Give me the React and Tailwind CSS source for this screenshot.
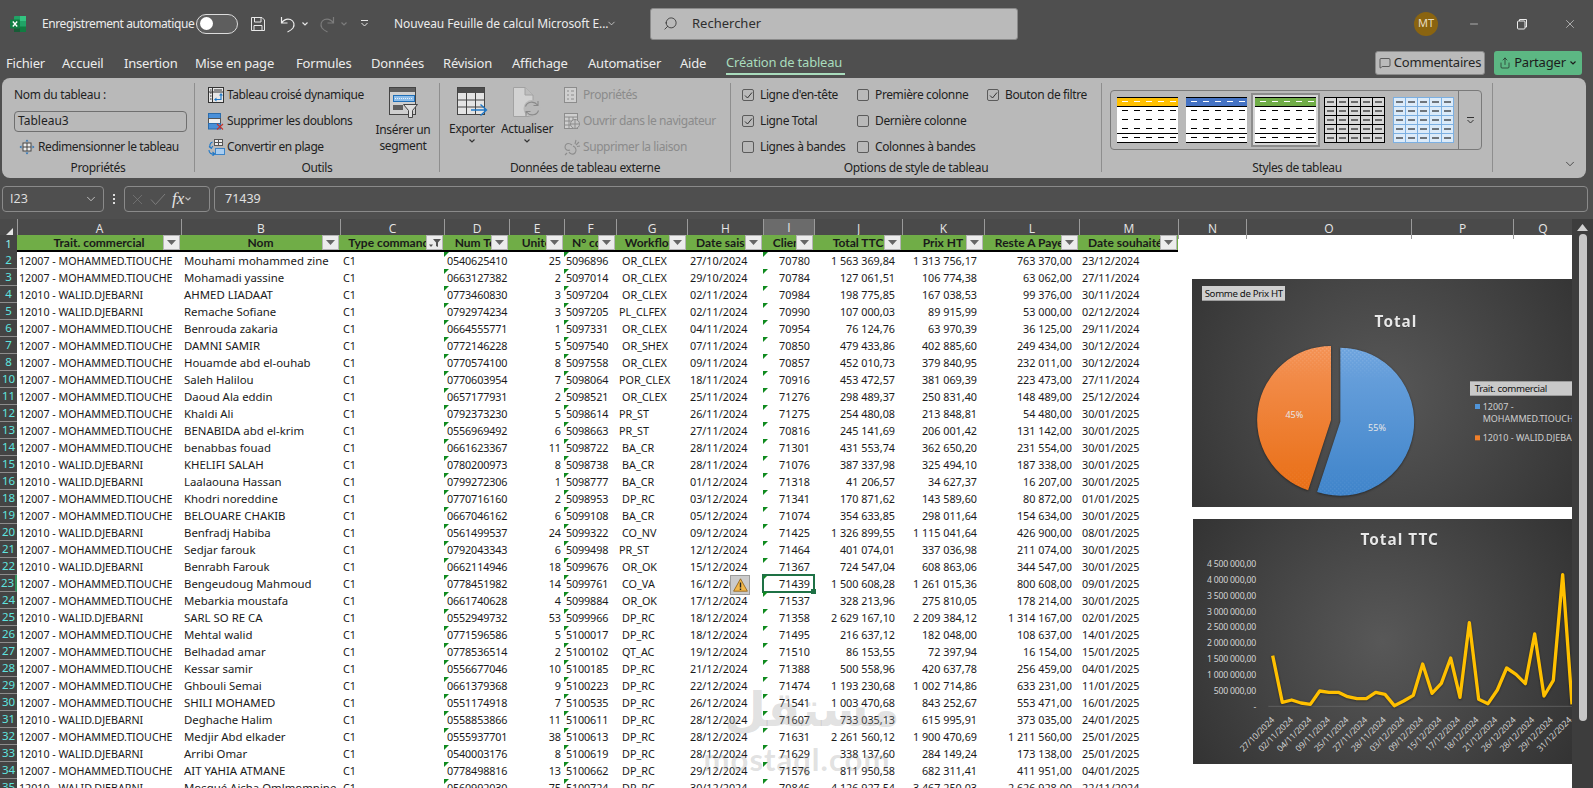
import { ChevronDown, Search, MessageSquare, Share, Minus, X } from 'lucide-react';

const T = '12007 - MOHAMMED.TIOUCHE';
const D = '12010 - WALID.DJEBARNI';

const rows = [
  [2, T, 'Mouhami mohammed zine', '0540625410', 25, '5096896', 'OR_CLEX', '27/10/2024', '70780', '1 563 369,84', '1 313 756,17', '763 370,00', '23/12/2024'],
  [3, T, 'Mohamadi yassine', '0663127382', 2, '5097014', 'OR_CLEX', '29/10/2024', '70784', '127 061,51', '106 774,38', '63 062,00', '27/11/2024'],
  [4, D, 'AHMED LIADAAT', '0773460830', 3, '5097204', 'OR_CLEX', '02/11/2024', '70984', '198 775,85', '167 038,53', '99 376,00', '30/11/2024'],
  [5, D, 'Remache Sofiane', '0792974234', 3, '5097205', 'PL_CLFEX', '02/11/2024', '70990', '107 000,03', '89 915,99', '53 000,00', '02/12/2024'],
  [6, T, 'Benrouda zakaria', '0664555771', 1, '5097331', 'OR_CLEX', '04/11/2024', '70954', '76 124,76', '63 970,39', '36 125,00', '29/11/2024'],
  [7, T, 'DAMNI SAMIR', '0772146228', 5, '5097540', 'OR_SHEX', '07/11/2024', '70850', '479 433,86', '402 885,60', '249 434,00', '30/12/2024'],
  [8, T, 'Houamde abd el-ouhab', '0770574100', 8, '5097558', 'OR_CLEX', '09/11/2024', '70857', '452 010,73', '379 840,95', '232 011,00', '30/12/2024'],
  [10, T, 'Saleh Halilou', '0770603954', 7, '5098064', 'POR_CLEX', '18/11/2024', '70916', '453 472,57', '381 069,39', '223 473,00', '27/11/2024'],
  [11, T, 'Daoud Ala eddin', '0657177931', 2, '5098521', 'OR_CLEX', '25/11/2024', '71276', '298 489,37', '250 831,40', '148 489,00', '25/12/2024'],
  [12, T, 'Khaldi Ali', '0792373230', 5, '5098614', 'PR_ST', '26/11/2024', '71275', '254 480,08', '213 848,81', '54 480,00', '30/01/2025'],
  [13, T, 'BENABIDA abd el-krim', '0556969492', 6, '5098663', 'PR_ST', '27/11/2024', '70816', '245 141,69', '206 001,42', '131 142,00', '30/01/2025'],
  [14, T, 'benabbas fouad', '0661623367', 11, '5098722', 'BA_CR', '28/11/2024', '71301', '431 553,74', '362 650,20', '231 554,00', '30/01/2025'],
  [15, D, 'KHELIFI SALAH', '0780200973', 8, '5098738', 'BA_CR', '28/11/2024', '71076', '387 337,98', '325 494,10', '187 338,00', '30/01/2025'],
  [16, D, 'Laalaouna Hassan', '0799272306', 1, '5098777', 'BA_CR', '01/12/2024', '71318', '41 206,57', '34 627,37', '16 207,00', '30/01/2025'],
  [18, T, 'Khodri noreddine', '0770716160', 2, '5098953', 'DP_RC', '03/12/2024', '71341', '170 871,62', '143 589,60', '80 872,00', '01/01/2025'],
  [19, T, 'BELOUARE CHAKIB', '0667046162', 6, '5099108', 'BA_CR', '05/12/2024', '71074', '354 633,85', '298 011,64', '154 634,00', '30/01/2025'],
  [20, D, 'Benfradj Habiba', '0561499537', 24, '5099322', 'CO_NV', '09/12/2024', '71425', '1 326 899,55', '1 115 041,64', '426 900,00', '08/01/2025'],
  [21, T, 'Sedjar farouk', '0792043343', 6, '5099498', 'PR_ST', '12/12/2024', '71464', '401 074,01', '337 036,98', '211 074,00', '30/01/2025'],
  [22, D, 'Benrabh Farouk', '0662114946', 18, '5099676', 'OR_OK', '15/12/2024', '71367', '724 547,04', '608 863,06', '344 547,00', '30/01/2025'],
  [23, T, 'Bengeudoug Mahmoud', '0778451982', 14, '5099761', 'CO_VA', '16/12/2024', '71439', '1 500 608,28', '1 261 015,36', '800 608,00', '09/01/2025'],
  [24, T, 'Mebarkia moustafa', '0661740628', 4, '5099884', 'OR_OK', '17/12/2024', '71537', '328 213,96', '275 810,05', '178 214,00', '30/01/2025'],
  [25, D, 'SARL SO RE CA', '0552949732', 53, '5099966', 'DP_RC', '18/12/2024', '71358', '2 629 167,10', '2 209 384,12', '1 314 167,00', '02/01/2025'],
  [26, T, 'Mehtal walid', '0771596586', 5, '5100017', 'DP_RC', '18/12/2024', '71495', '216 637,12', '182 048,00', '108 637,00', '14/01/2025'],
  [27, T, 'Belhadad amar', '0778536514', 2, '5100102', 'QT_AC', '19/12/2024', '71510', '86 153,55', '72 397,94', '16 154,00', '15/01/2025'],
  [28, T, 'Kessar samir', '0556677046', 10, '5100185', 'DP_RC', '21/12/2024', '71388', '500 558,96', '420 637,78', '256 459,00', '04/01/2025'],
  [29, T, 'Ghbouli Semai', '0661379368', 9, '5100223', 'DP_RC', '22/12/2024', '71474', '1 193 230,68', '1 002 714,86', '633 231,00', '11/01/2025'],
  [30, T, 'SHILI MOHAMED', '0551174918', 7, '5100535', 'DP_RC', '26/12/2024', '71541', '1 003 470,68', '843 252,67', '553 471,00', '16/01/2025'],
  [31, D, 'Deghache Halim', '0558853866', 11, '5100611', 'DP_RC', '28/12/2024', '71607', '733 035,13', '615 995,91', '373 035,00', '24/01/2025'],
  [32, T, 'Medjir Abd elkader', '0555937701', 38, '5100613', 'DP_RC', '28/12/2024', '71631', '2 261 560,12', '1 900 470,69', '1 211 560,00', '25/01/2025'],
  [33, D, 'Arribi Omar', '0540003176', 8, '5100619', 'DP_RC', '28/12/2024', '71629', '338 137,60', '284 149,24', '173 138,00', '25/01/2025'],
  [34, T, 'AIT YAHIA ATMANE', '0778498816', 13, '5100662', 'DP_RC', '29/12/2024', '71576', '811 950,58', '682 311,41', '411 951,00', '04/01/2025'],
  [35, D, 'Mosqué Aicha Omlmomnine', '0560992030', 75, '5100724', 'DP_RC', '30/12/2024', '70846', '4 126 927,54', '3 467 250,03', '2 626 928,00', '22/11/2024'],
];

const gridCols = 'grid grid-cols-[17px_164px_159px_104px_65px_55px_52px_71px_76px_51px_88px_82px_95px_99px_1fr]';

const columnLetters = ['A', 'B', 'C', 'D', 'E', 'F', 'G', 'H', 'I', 'J', 'K', 'L', 'M'];
const headers = ['Trait. commercial', 'Nom', 'Type commande', 'Num Tel', 'Unité', 'N° cde', 'Workflow', 'Date saisie', 'Client', 'Total TTC', 'Prix HT', 'Reste A Payer', 'Date souhaitée'];

const tabs = [
  ['Fichier', 'w-[56px]'],
  ['Accueil', 'w-[62px]'],
  ['Insertion', 'w-[71px]'],
  ['Mise en page', 'w-[101px]'],
  ['Formules', 'w-[75px]'],
  ['Données', 'w-[72px]'],
  ['Révision', 'w-[69px]'],
  ['Affichage', 'w-[76px]'],
  ['Automatiser', 'w-[92px]'],
  ['Aide', 'w-[46px]'],
];

function ExcelIcon() {
  return (
    <svg width="16" height="16" viewBox="0 0 16 16">
      <rect x="4" y="0" width="12" height="16" rx="1" fill="#21a366" />
      <rect x="10" y="0" width="6" height="5" fill="#33c481" />
      <rect x="10" y="10.5" width="6" height="5.5" fill="#107c41" />
      <rect x="4" y="10.5" width="6" height="5.5" fill="#185c37" />
      <rect x="0" y="3.5" width="10" height="9" rx="1" fill="#107c41" />
      <path d="M2.8 5.5 L7.2 10.5 M7.2 5.5 L2.8 10.5" stroke="#fff" strokeWidth="1.3" />
    </svg>
  );
}

function SaveIcon() {
  return (
    <svg width="16" height="16" viewBox="0 0 16 16" fill="none" stroke="#e8e8e8" strokeWidth="1">
      <path d="M1.5 1.5 H12 L14.5 4 V14.5 H1.5 Z" />
      <path d="M4.5 1.5 V6 H11 V1.5 M4 14.5 V9.5 H12 V14.5" />
    </svg>
  );
}

function UndoIcon({ color }) {
  return (
    <svg width="16" height="18" viewBox="0 0 16 18" fill="none" stroke={color} strokeWidth="1.2">
      <path d="M1.5 2 V8 H7.5 M1.5 8 C4 4.5 7.5 3.5 10.5 4.5 C14 6 15 10 13 13 C11.5 15 9.5 16 7.5 17" />
    </svg>
  );
}

function TinyChevron({ color = '#e6e6e6' }) {
  return (
    <svg width="8" height="8" viewBox="0 0 8 8" fill="none" stroke={color} strokeWidth="1.2">
      <path d="M1.5 2.5 L4 5 L6.5 2.5" />
    </svg>
  );
}

function TitleBar() {
  return (
    <div className="h-[47px] flex items-center text-[#ececec] text-[12px]">
      <div className="ml-[10px] w-[16px]"><ExcelIcon /></div>
      <div className="ml-[16px] w-[154px] whitespace-nowrap tracking-[-0.42px]">Enregistrement automatique</div>
      <div className="w-[42px] h-[20px] rounded-full border border-[#dcdcdc] bg-[#5e5e5e] flex items-center pl-[3px]">
        <div className="w-[13px] h-[13px] rounded-full bg-white" />
      </div>
      <div className="ml-[12px] w-[16px]"><SaveIcon /></div>
      <div className="ml-[14px] w-[16px]"><UndoIcon color="#ececec" /></div>
      <div className="ml-[5px] w-[8px]"><TinyChevron /></div>
      <div className="ml-[10px] w-[16px] -scale-x-100"><UndoIcon color="#7c7c7c" /></div>
      <div className="ml-[5px] w-[8px]"><TinyChevron color="#7c7c7c" /></div>
      <div className="ml-[12px] w-[9px]">
        <svg width="9" height="9" viewBox="0 0 9 9" fill="none" stroke="#e6e6e6" strokeWidth="1">
          <path d="M1 1.5 H8 M1.5 4 L4.5 7 L7.5 4" />
        </svg>
      </div>
      <div className="ml-[25px] w-[212px] whitespace-nowrap tracking-[-0.1px]">Nouveau Feuille de calcul Microsoft E...</div>
      <div className="w-[10px]"><ChevronDown size={11} strokeWidth={1.5} /></div>
      <div className="ml-[34px] w-[368px] h-[32px] rounded-[3px] bg-[#bababa] border border-[#8a8a8a] flex items-center text-[#2e2e2e] text-[13px]">
        <Search size={15} strokeWidth={1.3} className="ml-[12px] -scale-x-100" />
        <span className="ml-[14px]">Rechercher</span>
      </div>
      <div className="ml-[396px] w-[24px] h-[24px] rounded-full bg-[#8a6410] flex items-center justify-center text-[11px] text-[#e8dcc0]">MT</div>
      <Minus size={12} strokeWidth={1.2} className="ml-[30px]" />
      <svg width="12" height="12" viewBox="0 0 12 12" fill="none" stroke="#ececec" strokeWidth="1" className="ml-[36px]">
        <rect x="1.5" y="3" width="7.5" height="8" rx="1" />
        <path d="M3.5 3 V1.5 H10.5 V9 H9" />
      </svg>
      <X size={14} strokeWidth={1} className="ml-[35px]" />
    </div>
  );
}

function TabBar() {
  return (
    <div className="h-[31px] flex items-start pl-[6px] text-[13px] text-[#ececec]">
      {tabs.map(([label, w]) => (
        <div key={label} className={w + ' h-[28px] flex items-center whitespace-nowrap tracking-[-0.2px] pt-[6px]'}>{label}</div>
      ))}
      <div className="w-[119px] h-[28px] flex items-center whitespace-nowrap tracking-[-0.2px] pt-[6px] text-[#a9dcbd] border-b-2 border-[#a9dcbd]">
        Création de tableau
      </div>
      <div className="ml-[530px] mt-[4px] w-[110px] h-[24px] rounded-[3px] bg-[#bababa] border border-[#8a8a8a] flex items-center justify-center gap-[3px] text-[#262626]">
        <MessageSquare size={12} strokeWidth={1.3} />
        <span className="tracking-[-0.2px]">Commentaires</span>
      </div>
      <div className="ml-[9px] mt-[4px] w-[88px] h-[24px] rounded-[3px] bg-[#5cb783] flex items-center justify-center gap-[3px] text-[#1c1c1c]">
        <Share size={12} strokeWidth={1.3} />
        <span className="tracking-[-0.2px]">Partager</span>
        <TinyChevron color="#1c1c1c" />
      </div>
    </div>
  );
}

function PivotIcon() {
  return (
    <svg width="16" height="16" viewBox="0 0 16 16" fill="none">
      <rect x="0.5" y="0.5" width="15" height="15" fill="#e6e6e6" stroke="#333" />
      <path d="M4.5 1 V15" stroke="#333" />
      <path d="M6 3 H14 M2 3 H3.5 M2 6 H3.5 M2 9 H3.5 M2 12 H3.5 M1 5 H15" stroke="#333" />
      <path d="M8 12.5 H13 V8" stroke="#1f78c8" strokeWidth="1.2" />
      <path d="M6 12.5 L8.5 10.5 V14.5 Z M13 6 L11 8.5 H15 Z" fill="#1f78c8" />
    </svg>
  );
}

function DedupeIcon() {
  return (
    <svg width="17" height="17" viewBox="0 0 17 17" fill="none">
      <rect x="0.5" y="0.5" width="12" height="5" fill="#4a90d9" stroke="#2c6cab" />
      <rect x="0.5" y="5.5" width="12" height="5" fill="#efefef" stroke="#555" />
      <rect x="0.5" y="10.5" width="12" height="5.5" fill="#4a90d9" stroke="#2c6cab" />
      <path d="M9 11 L15 16.5 M15 11 L9 16.5" stroke="#c8322b" strokeWidth="1.2" />
    </svg>
  );
}

function ConvertIcon() {
  return (
    <svg width="17" height="17" viewBox="0 0 17 17" fill="none">
      <rect x="6.5" y="0.5" width="8" height="6" fill="#eee" stroke="#555" />
      <path d="M10.5 .5 V6.5 M6.5 3.5 H14.5" stroke="#555" />
      <rect x="7.5" y="9.5" width="9" height="6" fill="#a9cdf0" stroke="#3b84c8" />
      <path d="M4.5 3 C1.5 4 1 7.5 3 9 M1 7.5 L3.3 9.5 L4.8 7" stroke="#1f78c8" strokeWidth="1.1" />
      <path d="M1 11 C1 14 3 15.5 6.5 15 M4.5 13 L6.8 15 L4.5 16.8" stroke="#1f78c8" strokeWidth="1.1" />
    </svg>
  );
}

function ResizeIcon() {
  return (
    <svg width="16" height="16" viewBox="0 0 16 16" fill="none">
      <rect x="4" y="4" width="8" height="8" fill="#eee" stroke="#444" />
      <path d="M8 4 V12 M4 8 H12" stroke="#444" />
      <path d="M8 0.5 L6.5 2.5 H9.5 Z M8 15.5 L6.5 13.5 H9.5 Z M0.5 8 L2.5 6.5 V9.5 Z M15.5 8 L13.5 6.5 V9.5 Z" fill="#1f6fb8" />
    </svg>
  );
}

function SliceIcon() {
  return (
    <svg width="29" height="31" viewBox="0 0 29 31" fill="none">
      <rect x="0.5" y="0.5" width="26" height="27" fill="#cfcfcf" stroke="#444" />
      <rect x="1" y="1" width="25" height="4" fill="#5e5e5e" />
      <rect x="4.5" y="8.5" width="21" height="6" fill="#8cbdea" stroke="#1f6fb8" />
      <path d="M6 11.5 H24" stroke="#e8f2fb" strokeDasharray="1 1" />
      <rect x="4" y="18" width="10" height="5" fill="#5e5e5e" />
      <path d="M14.5 17.5 H28.5 L23.5 23.5 V30.5 L19.5 30.5 V23.5 Z" fill="#dedede" stroke="#444" />
    </svg>
  );
}

function ExportIcon() {
  return (
    <svg width="31" height="31" viewBox="0 0 31 31" fill="none">
      <rect x="0.5" y="0.5" width="27" height="27" fill="#e4e4e4" stroke="#444" />
      <rect x="1" y="1" width="26" height="5" fill="#4d4d4d" />
      <path d="M1 13 H27 M1 20 H27 M9.5 6 V27 M18.5 6 V27" stroke="#444" />
      <path d="M14 23 H29 M23.5 17.5 L29.5 23 L23.5 28.5" stroke="#1f78c8" strokeWidth="1.4" />
    </svg>
  );
}

function RefreshIcon() {
  return (
    <svg width="28" height="31" viewBox="0 0 28 31" fill="none">
      <path d="M0.5 0.5 H12 L20 8 V29.5 H0.5 Z" fill="#d2d2d2" stroke="#a2a2a2" />
      <path d="M12 0.5 V8 H20" fill="#bdbdbd" stroke="#a2a2a2" />
      <circle cx="19" cy="21.5" r="8.5" fill="#b9b9b9" />
      <path d="M12.5 19.5 C14 14.5 21 13.5 24.5 18 M25 14 V18.5 H20.5 M25.5 23.5 C24 28.5 17 29.5 13.5 25 M13 29 V24.5 H17.5" stroke="#8a8a8a" strokeWidth="1.1" />
    </svg>
  );
}

function DisabledIcon({ kind }) {
  if (kind === 'props') {
    return (
      <svg width="13" height="16" viewBox="0 0 13 16" fill="none" stroke="#8c8c8c">
        <rect x="0.5" y="0.5" width="12" height="15" fill="#cfcfcf" />
        <path d="M3 4 H5 M7 4 H10 M3 8 H5 M7 8 H10 M3 12 H5 M7 12 H10" />
      </svg>
    );
  }
  if (kind === 'open') {
    return (
      <svg width="16" height="17" viewBox="0 0 16 17" fill="none" stroke="#8c8c8c">
        <rect x="0.5" y="0.5" width="13" height="15" fill="#cfcfcf" />
        <path d="M1 4 H13 M1 8 H13 M1 12 H13 M5 4 V15 M9 4 V15" />
        <circle cx="11" cy="11" r="4.5" fill="#c6c6c6" />
        <path d="M6.5 11 H15.5 M11 6.5 V15.5" />
      </svg>
    );
  }
  return (
    <svg width="17" height="17" viewBox="0 0 17 17" fill="none" stroke="#8c8c8c" strokeWidth="1.1">
      <path d="M8 6 C4 3 1 5 1 8 C1 11 4 12 6 11 M9 7 C12 8 13 12 11 14 C9 16 6 15 5 13" />
      <path d="M12 1 L11 5 M15 3 L12 6 M16 7 L13 7.5 M3 14 L1 16" />
    </svg>
  );
}

function RibbonRow({ icon, label, dim }) {
  return (
    <div className={'h-[26px] flex items-center whitespace-nowrap ' + (dim ? 'text-[#8b8b8b]' : '')}>
      <div className="w-[19px] flex items-center">{icon}</div>
      <span className="tracking-[-0.42px]">{label}</span>
    </div>
  );
}

function Check({ checked, label }) {
  return (
    <div className="h-[26px] flex items-center whitespace-nowrap">
      <div className="w-[12px] h-[12px] rounded-[2px] border border-[#5b5b5b] flex items-center justify-center">
        {checked && (
          <svg width="9" height="9" viewBox="0 0 9 9" fill="none" stroke="#333" strokeWidth="1">
            <path d="M1 4.5 L3.5 7 L8 1.5" />
          </svg>
        )}
      </div>
      <span className="ml-[6px] tracking-[-0.38px]">{label}</span>
    </div>
  );
}

function GroupLabel({ children }) {
  return <div className="h-[16px] flex items-center justify-center whitespace-nowrap tracking-[-0.35px]">{children}</div>;
}

function Sep() {
  return <div className="w-px h-[89px] mt-[5px] shrink-0 bg-[#8e8e8e]" />;
}

function StyleThumb({ color, selected }) {
  const xs = [5, 17, 29, 41, 53];
  return (
    <div className={selected ? 'w-[69px] h-[54px] -mx-[4px] flex items-center justify-center border-2 border-[#8c8c8c] bg-[#d6d6d6]' : 'h-[46px]'}>
      <svg width="61" height="46" viewBox="0 0 61 46">
        <rect width="61" height="46" fill="#fff" />
        <rect width="61" height="1" fill="#000" />
        <rect y="1" width="61" height="8" fill={color} />
        <rect y="9" width="61" height="1" fill="#000" />
        <rect y="36" width="61" height="1" fill="#000" />
        <rect y="45" width="61" height="1" fill="#000" />
        {xs.map((x) => (
          <g key={x}>
            <rect x={x} y="4" width="6" height="1" fill="#fff" />
            <rect x={x} y="13" width="6" height="1" fill="#000" />
            <rect x={x} y="22" width="6" height="1" fill="#000" />
            <rect x={x} y="31" width="6" height="1" fill="#000" />
            <rect x={x} y="40" width="6" height="1" fill="#000" />
          </g>
        ))}
      </svg>
    </div>
  );
}

function GridThumb({ fill, line, dash }) {
  const xs = [0, 12, 24, 36, 48, 60];
  const ys = [0, 9, 18, 27, 36, 45];
  return (
    <svg width="61" height="46" viewBox="0 0 61 46">
      <rect width="61" height="46" fill={fill} />
      {xs.map((x) => <rect key={x} x={x} width="1" height="46" fill={line} />)}
      {ys.map((y) => <rect key={y} y={y} width="61" height="1" fill={line} />)}
      {xs.slice(0, 5).map((x) => ys.slice(0, 5).map((y) => (
        <rect key={x + '-' + y} x={x + 3} y={y + 4.5} width="7" height="1" fill={dash} />
      )))}
    </svg>
  );
}

function Ribbon() {
  return (
    <div className="mx-[2px] w-[1584px] h-[100px] rounded-[8px] bg-[#b9b9b9] flex text-[12px] text-[#1f1f1f] shrink-0">
      {/* proprietes */}
      <div className="w-[192px] shrink-0 pt-[4px]">
        <div className="h-[78px] pl-[12px]">
          <div className="h-[26px] flex items-center tracking-[-0.35px]">Nom du tableau :</div>
          <div className="h-[26px] flex items-center">
            <div className="w-[173px] h-[21px] rounded-[4px] border border-[#6f6f6f] flex items-center pl-[3px]">Tableau3</div>
          </div>
          <div className="h-[26px] flex items-center pl-[5px] whitespace-nowrap">
            <ResizeIcon />
            <span className="ml-[3px] tracking-[-0.42px]">Redimensionner le tableau</span>
          </div>
        </div>
        <GroupLabel>Propriétés</GroupLabel>
      </div>
      <Sep />
      {/* outils */}
      <div className="w-[244px] shrink-0 pt-[4px]">
        <div className="h-[78px] flex">
          <div className="w-[178px] pl-[13px]">
            <RibbonRow icon={<PivotIcon />} label="Tableau croisé dynamique" />
            <RibbonRow icon={<DedupeIcon />} label="Supprimer les doublons" />
            <RibbonRow icon={<ConvertIcon />} label="Convertir en plage" />
          </div>
          <div className="w-[60px] flex flex-col items-center pt-[5px]">
            <SliceIcon />
            <div className="mt-[4px] leading-[16px] text-center tracking-[-0.35px]">Insérer un<br />segment</div>
          </div>
        </div>
        <GroupLabel>Outils</GroupLabel>
      </div>
      <Sep />
      {/* donnees externes */}
      <div className="w-[290px] shrink-0 pt-[4px]">
        <div className="h-[78px] flex">
          <div className="ml-[6px] w-[52px] flex flex-col items-center pt-[5px]">
            <ExportIcon />
            <div className="mt-[3px] leading-[16px] tracking-[-0.35px]">Exporter</div>
            <TinyChevron color="#333" />
          </div>
          <div className="w-[58px] flex flex-col items-center pt-[5px]">
            <RefreshIcon />
            <div className="mt-[3px] leading-[16px] tracking-[-0.35px]">Actualiser</div>
            <TinyChevron color="#333" />
          </div>
          <div className="ml-[8px]">
            <RibbonRow dim icon={<DisabledIcon kind="props" />} label="Propriétés" />
            <RibbonRow dim icon={<DisabledIcon kind="open" />} label="Ouvrir dans le navigateur" />
            <RibbonRow dim icon={<DisabledIcon kind="link" />} label="Supprimer la liaison" />
          </div>
        </div>
        <GroupLabel>Données de tableau externe</GroupLabel>
      </div>
      <Sep />
      {/* options de style */}
      <div className="w-[370px] shrink-0 pt-[4px]">
        <div className="h-[78px] flex pl-[11px]">
          <div className="w-[115px]">
            <Check checked label="Ligne d'en-tête" />
            <Check checked label="Ligne Total" />
            <Check label="Lignes à bandes" />
          </div>
          <div className="w-[130px]">
            <Check label="Première colonne" />
            <Check label="Dernière colonne" />
            <Check label="Colonnes à bandes" />
          </div>
          <div>
            <Check checked label="Bouton de filtre" />
          </div>
        </div>
        <GroupLabel>Options de style de tableau</GroupLabel>
      </div>
      <Sep />
      {/* styles */}
      <div className="w-[390px] shrink-0 pt-[4px]">
        <div className="h-[78px] pl-[8px] pt-[8px]">
          <div className="w-[372px] h-[60px] rounded-[4px] border border-[#7a7a7a] flex items-center pl-[6px]">
            <div className="flex items-center gap-[8px] w-[343px]">
              <StyleThumb color="#ffc000" />
              <StyleThumb color="#4472c4" />
              <StyleThumb color="#70ad47" selected />
              <GridThumb fill="#d9d9d9" line="#000" dash="#000" />
              <GridThumb fill="#dcebf9" line="#7cb0e2" dash="#000" />
            </div>
            <div className="w-[23px] self-stretch border-l border-[#7a7a7a] flex items-center justify-center">
              <svg width="9" height="9" viewBox="0 0 9 9" fill="none" stroke="#333" strokeWidth="1">
                <path d="M1 1.5 H8 M1.5 4 L4.5 7 L7.5 4" />
              </svg>
            </div>
          </div>
        </div>
        <GroupLabel>Styles de tableau</GroupLabel>
      </div>
      <Sep />
      <div className="flex-1 flex items-end justify-end pr-[9px] pb-[7px]">
        <ChevronDown size={14} strokeWidth={1.2} />
      </div>
    </div>
  );
}

function FormulaBar() {
  return (
    <div className="h-[41px] pt-[8px] flex text-[#e0e0e0] text-[12.5px] shrink-0">
      <div className="ml-[2px] w-[102px] h-[26px] rounded-[4px] border border-[#8a8a8a] flex items-center justify-between pl-[7px] pr-[5px]">
        <span className="font-['Open_Sans',sans-serif]">I23</span>
        <ChevronDown size={14} strokeWidth={1.3} />
      </div>
      <div className="w-[20px] h-[26px] flex flex-col items-center justify-center gap-[2px]">
        <div className="w-[2px] h-[2px] bg-[#ddd]" />
        <div className="w-[2px] h-[2px] bg-[#ddd]" />
        <div className="w-[2px] h-[2px] bg-[#ddd]" />
      </div>
      <div className="w-[86px] h-[26px] rounded-[4px] border border-[#8a8a8a] flex items-center pl-[4px]">
        <X size={17} strokeWidth={1} className="text-[#7d7d7d]" />
        <svg width="16" height="13" viewBox="0 0 16 13" fill="none" stroke="#7d7d7d" className="ml-[4px]">
          <path d="M1 6.5 L5.5 11.5 L15 1" />
        </svg>
        <span className="ml-[6px] italic text-[17px] font-['Liberation_Serif',serif] text-[#e5e5e5]">fx</span>
        <TinyChevron color="#bbb" />
      </div>
      <div className="ml-[4px] w-[1374px] h-[26px] rounded-[4px] border border-[#8a8a8a] flex items-center pl-[10px]">71439</div>
    </div>
  );
}

function FilterButton({ applied }) {
  return (
    <div className="absolute right-[1px] top-0 w-[17px] h-[15px] bg-[#ececec] border border-[#b5b5b5] flex items-center justify-center">
      {applied ? (
        <svg width="12" height="10" viewBox="0 0 12 10">
          <path d="M4 1 H12 L9 4.5 V9 L7 8 V4.5 Z" fill="#555" />
          <path d="M0 6.5 H4 L2 9 Z" fill="#555" />
        </svg>
      ) : (
        <svg width="9" height="5" viewBox="0 0 9 5"><path d="M0 0 H9 L4.5 5 Z" fill="#666" /></svg>
      )}
    </div>
  );
}

function Flag() {
  return <span className="absolute left-0 top-0 w-0 h-0 border-t-[5px] border-t-[#0f8a1e] border-r-[5px] border-r-transparent" />;
}

function Cell({ className = '', flag, children }) {
  return (
    <div className={'relative h-[17px] pt-[1px] flex items-center overflow-hidden whitespace-nowrap ' + className}>
      {flag && <Flag />}
      {children}
    </div>
  );
}

function SheetRow({ row }) {
  const [n, comm, name, tel, units, cde, wf, date, client, ttc, ht, reste, souh] = row;
  const active = n === 23;
  const shortWf = wf === 'PL_CLFEX' || wf === 'POR_CLEX' || wf === 'PR_ST';
  return (
    <div className={gridCols + ' h-[17px] text-[10.8px]'}>
      <div className={'h-[17px] flex items-center justify-center bg-[#444] border-b border-[#8d8d8d] text-[#5fe3df] text-[11.5px] ' + (active ? 'bg-[#5a5a5a] border-r-2 border-r-[#2e8b57]' : '')}>{n}</div>
      <Cell className="pl-[2px] text-[10.7px]">{comm}</Cell>
      <Cell className="pl-[3px] text-[11.4px]">{name}</Cell>
      <Cell className="pl-[3px]">C1</Cell>
      <Cell className="pl-[3px] tracking-[-0.15px]" flag>{tel}</Cell>
      <Cell className="justify-end pr-[3px]">{units}</Cell>
      <Cell className="pl-[2px] tracking-[-0.15px]" flag>{cde}</Cell>
      <Cell className={shortWf ? 'pl-[3px]' : 'pl-[6px]'}>{wf}</Cell>
      <Cell className="pl-[3px] !overflow-visible">
        {date}
        {active && (
          <div className="absolute left-[43px] top-[0px] z-10 w-[20px] h-[20px] bg-[#cbcbcb] border border-[#9c9c9c] flex items-center justify-center">
            <svg width="15" height="14" viewBox="0 0 15 14">
              <path d="M7.5 0.8 L14.4 13.2 H0.6 Z" fill="#f2b84b" stroke="#8a5a10" strokeWidth="0.8" />
              <path d="M7.5 4.5 V9.5 M7.5 10.5 V12" stroke="#222" strokeWidth="1.4" />
            </svg>
          </div>
        )}
      </Cell>
      <Cell className="justify-end pr-[4px] !overflow-visible" flag>
        {client}
        {active && (
          <span className="absolute -left-[1px] -top-[1px] -right-[1px] -bottom-[1px] border-2 border-[#1e7145]">
            <span className="absolute -right-[3px] -bottom-[3px] w-[5px] h-[5px] bg-[#1e7145]" />
          </span>
        )}
      </Cell>
      <Cell className="justify-end pr-[7px]">{ttc}</Cell>
      <Cell className="justify-end pr-[7px]">{ht}</Cell>
      <Cell className="justify-end pr-[7px]">{reste}</Cell>
      <Cell className="pl-[3px]">{souh}</Cell>
      <div />
    </div>
  );
}

function PieChart() {
  return (
    <div className="absolute left-[1192px] top-[60px] w-[380px] h-[228px] bg-[radial-gradient(circle,#585858,#353535)]">
      <svg width="380" height="228" viewBox="96 207 1140 684" fontFamily="'Noto Sans', sans-serif">
        <defs>
          <linearGradient id="pieBlue" x1="0" y1="0" x2="0" y2="1">
            <stop offset="0" stopColor="#6ea4de" />
            <stop offset="1" stopColor="#3f84ca" />
          </linearGradient>
          <linearGradient id="pieOrange" x1="0" y1="0" x2="0" y2="1">
            <stop offset="0" stopColor="#f49255" />
            <stop offset="1" stopColor="#e96f16" />
          </linearGradient>
          <linearGradient id="dotFade" x1="0" y1="0" x2="0" y2="1">
            <stop offset="0" stopColor="#fff" stopOpacity="0.9" />
            <stop offset="0.22" stopColor="#fff" stopOpacity="0" />
            <stop offset="0.82" stopColor="#fff" stopOpacity="0" />
            <stop offset="1" stopColor="#fff" stopOpacity="0.5" />
          </linearGradient>
          <pattern id="speck" width="12" height="12" patternUnits="userSpaceOnUse">
            <rect x="1" y="1" width="3" height="3" fill="#fff" />
            <rect x="7" y="7" width="3" height="3" fill="#fff" />
          </pattern>
          <mask id="speckMask">
            <rect x="96" y="207" width="1140" height="684" fill="url(#speck)" />
          </mask>
        </defs>
        <rect x="126" y="228" width="249" height="44" fill="#cfcfcf" />
        <text x="134" y="260" fontSize="29" fill="#111" letterSpacing="-1">Somme de Prix HT</text>
        <text x="708" y="350" fontSize="46" fontWeight="700" fill="#e8e8e8" textAnchor="middle" letterSpacing="3" className="drop-shadow-[0_1px_1px_rgba(0,0,0,0.6)]">Total</text>
        <g className="drop-shadow-[0_2px_3px_rgba(0,0,0,0.5)]">
          <path d="M513 630 L444.4 841 A222 222 0 0 1 513 408 Z" fill="url(#pieOrange)" />
          <path d="M541 635 L541 413 A222 222 0 1 1 471.4 846 Z" fill="url(#pieBlue)" />
        </g>
        <g mask="url(#speckMask)" opacity="0.4">
          <path d="M513 630 L444.4 841 A222 222 0 0 1 513 408 Z" fill="url(#dotFade)" />
          <path d="M541 635 L541 413 A222 222 0 1 1 471.4 846 Z" fill="url(#dotFade)" />
        </g>
        <text x="403" y="623" fontSize="27" fill="#e6e6e6" textAnchor="middle">45%</text>
        <text x="651" y="662" fontSize="27" fill="#e6e6e6" textAnchor="middle">55%</text>
        <rect x="930" y="514" width="306" height="43" fill="#c9c9c9" />
        <text x="944" y="545" fontSize="29" fill="#111" letterSpacing="-1">Trait. commercial</text>
        <rect x="945" y="582" width="15" height="15" fill="#5094d8" />
        <text x="968" y="600" fontSize="27" fill="#cfcfcf">12007 -</text>
        <text x="968" y="637" fontSize="27" fill="#cfcfcf">MOHAMMED.TIOUCHE</text>
        <rect x="945" y="676" width="15" height="15" fill="#f07f2a" />
        <text x="968" y="693" fontSize="27" fill="#cfcfcf">12010 - WALID.DJEBARNI</text>
      </svg>
    </div>
  );
}

const ttcPoints = '338,467 367,607 395,600 423,609 451,613 479,573 507,577 535,577 563,590 591,596 619,596 647,577 675,583 703,617 731,603 760,586 788,492 816,580 844,550 872,474 900,592 928,368 956,598 984,611 1012,570 1040,504 1068,523 1096,551 1124,402 1152,588 1180,541 1208,224 1236,613';
const yLabels = [['4 500 000,00', 191], ['4 000 000,00', 240], ['3 500 000,00', 288], ['3 000 000,00', 335], ['2 500 000,00', 381], ['2 000 000,00', 429], ['1 500 000,00', 477], ['1 000 000,00', 525], ['500 000,00', 573], ['-', 622]];
const xLabels = ['27/10/2024', '02/11/2024', '04/11/2024', '09/11/2024', '25/11/2024', '27/11/2024', '28/11/2024', '03/12/2024', '09/12/2024', '15/12/2024', '17/12/2024', '18/12/2024', '21/12/2024', '26/12/2024', '28/12/2024', '29/12/2024', '31/12/2024'];

function LineChart() {
  return (
    <div className="absolute left-[1193px] top-[300px] w-[379px] h-[245px] bg-[radial-gradient(circle,#585858,#333333)]">
      <svg width="379" height="245" viewBox="99 57 1137 735" fontFamily="'Noto Sans', sans-serif">
        <text x="719" y="135" fontSize="46" fontWeight="700" fill="#e8e8e8" textAnchor="middle" letterSpacing="3" className="drop-shadow-[0_1px_1px_rgba(0,0,0,0.6)]">Total TTC</text>
        {yLabels.map(([t, y]) => (
          <text key={t} x="288" y={y + 9} fontSize="26" fill="#d4d4d4" textAnchor="end" letterSpacing="-0.6">{t}</text>
        ))}
        <line x1="325" y1="619" x2="1236" y2="619" stroke="#6e6e6e" strokeWidth="2" />
        {xLabels.map((t, i) => (
          <text key={t} transform={`translate(${345 + i * 55.7} 662) rotate(-45)`} fontSize="26" fill="#cfcfcf" textAnchor="end" letterSpacing="-0.4">{t}</text>
        ))}
        <polyline points={ttcPoints} fill="none" stroke="#ffc000" strokeWidth="10" strokeLinejoin="round" className="drop-shadow-[0_2px_3px_rgba(0,0,0,0.45)]" />
      </svg>
    </div>
  );
}

function Scrollbar() {
  return (
    <div className="w-[21px] shrink-0 bg-[#3d3d3d] flex flex-col items-center pt-[4px]">
      <svg width="11" height="7" viewBox="0 0 11 7" className="mt-[1px]"><path d="M5.5 0 L11 7 H0 Z" fill="#d0d0d0" /></svg>
      <div className="mt-[3px] w-[8px] h-[487px] rounded-full bg-[#c6c6c6]" />
    </div>
  );
}

function Sheet() {
  return (
    <div className="flex flex-1 min-h-0 overflow-hidden">
      <div className="relative w-[1572px] shrink-0 overflow-hidden bg-white text-[#1a1a1a]">
        <div className="grid grid-cols-[17px_164px_159px_104px_65px_55px_52px_71px_76px_51px_88px_82px_95px_99px_68px_165px_102px_59px] h-[16px] bg-[#4a4a4a] text-[#e6e6e6] text-[12px] font-['Open_Sans',sans-serif]">
          <div className="flex items-end justify-center pb-[3px]">
            <svg width="8" height="8" viewBox="0 0 8 8"><path d="M8 0 V8 H0 Z" fill="#e6e6e6" /></svg>
          </div>
          {[...columnLetters, 'N', 'O', 'P', 'Q'].map((c) => (
            <div key={c} className={'flex items-center justify-center border-l border-[#9a9a9a] ' + (c === 'I' ? 'bg-[#6b6b6b] border-b-2 border-b-[#2e8b57]' : '')}>{c}</div>
          ))}
        </div>
        <div className={gridCols + ' h-[17px]'}>
          <div className="h-[17px] flex items-center justify-center bg-[#444] text-[#8ff0ec] text-[11.5px]">1</div>
          {headers.map((h, i) => (
            <div key={h} className="relative h-[17px] bg-[#70ad47] border-b-2 border-black flex justify-center items-center overflow-hidden whitespace-nowrap font-bold text-[#1a1a1a] text-[12px] font-['Lato',sans-serif]">
              {h}
              <FilterButton applied={i === 2} />
            </div>
          ))}
        </div>
        {rows.map((r) => <SheetRow key={r[0]} row={r} />)}
        <PieChart />
        <LineChart />
        <div className="absolute left-[680px] top-[455px] w-[234px] flex flex-col items-center text-[#9a9a9a]/30 pointer-events-none select-none">
          <span className="pl-[30px] text-[48px] leading-[70px] font-bold font-['DejaVu_Sans',sans-serif]">مستقل</span>
          <span className="text-[31px] leading-[30px] font-bold font-['Lato',sans-serif] tracking-[1px]">mostaql.com</span>
        </div>
      </div>
      <Scrollbar />
    </div>
  );
}

export default function App() {
  return (
    <div className="w-[1593px] h-[788px] overflow-hidden bg-[#4f4f4f] flex flex-col font-['Noto_Sans',sans-serif]">
      <TitleBar />
      <TabBar />
      <Ribbon />
      <FormulaBar />
      <Sheet />
    </div>
  );
}
